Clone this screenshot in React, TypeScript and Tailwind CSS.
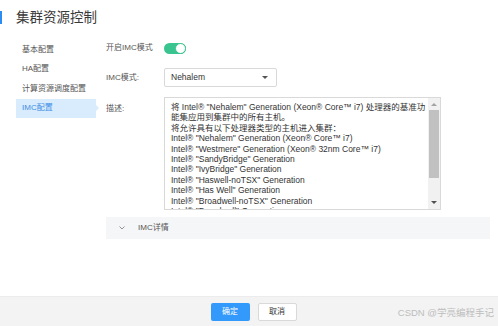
const FONT = '"Liberation Sans", "Noto Sans CJK SC", sans-serif';

const lines = [
  '将 Intel® "Nehalem" Generation (Xeon® Core™ i7) 处理器的基准功',
  "能集应用到集群中的所有主机。",
  "将允许具有以下处理器类型的主机进入集群：",
  'Intel® "Nehalem" Generation (Xeon® Core™ i7)',
  'Intel® "Westmere" Generation (Xeon® 32nm Core™ i7)',
  'Intel® "SandyBridge" Generation',
  'Intel® "IvyBridge" Generation',
  'Intel® "Haswell-noTSX" Generation',
  'Intel® "Has Well" Generation',
  'Intel® "Broadwell-noTSX" Generation',
  'Intel® "Broadwell" Generation',
];

const menu = ["基本配置", "HA配置", "计算资源调度配置", "IMC配置"];

export default function App() {
  return (
    <div
      className="relative flex h-[326px] w-[498px] flex-col overflow-hidden bg-white text-[#555]"
      style={{ fontFamily: FONT }}
    >
      {/* header */}
      <div className="flex h-[40px] items-start pt-[10px]">
        <div className="mt-[1px] h-[13px] w-[2px] bg-[#2d8cf0]" />
        <div className="ml-[14px] text-[13.5px] leading-[15px] text-[#3a3a3a]">集群资源控制</div>
      </div>

      {/* body */}
      <div className="flex flex-1">
        <div className="ml-[16px] w-[80px]">
          {menu.map((m, i) => {
            const active = i === menu.length - 1;
            return (
              <div
                key={m}
                className={
                  active
                    ? "relative flex h-[19.5px] items-center bg-[#d9ecfd] pl-[6px] text-[8px] text-[#3d8ee4]"
                    : "flex h-[19.5px] items-center pl-[6px] text-[8px] text-[#555]"
                }
              >
                {m}
                {active ? (
                  <span className="absolute right-[-3px] top-[6.5px] h-0 w-0 border-y-[3px] border-l-[3px] border-y-transparent border-l-[#d9ecfd]" />
                ) : null}
              </div>
            );
          })}
        </div>

        <div className="ml-[10px] flex w-[384px] flex-col">
          {/* toggle row */}
          <div className="flex h-[16px] items-center">
            <div className="w-[58px] text-[8px] text-[#555]">开启IMC模式</div>
            <div className="relative h-[11px] w-[22px] rounded-full bg-[#3ac48f]">
              <span className="absolute right-0 top-0 h-[11px] w-[11px] rounded-full border border-[#3ac48f] bg-white" />
            </div>
          </div>

          {/* select row */}
          <div className="mt-[12px] flex h-[19px] items-center">
            <div className="w-[58px] text-[8px] text-[#555]">IMC模式:</div>
            <div className="flex h-[19px] w-[113px] items-center justify-between rounded-[2px] border border-[#d9d9d9] pl-[6px] pr-[8px] text-[8.5px] text-[#333]">
              <span>Nehalem</span>
              <span className="h-0 w-0 border-x-[3px] border-t-[3px] border-x-transparent border-t-[#555]" />
            </div>
          </div>

          {/* description */}
          <div className="mt-[10px] flex">
            <div className="w-[58px] pt-[6px] text-[8px] text-[#555]">描述:</div>
            <div className="flex h-[113px] w-[277px] overflow-hidden border border-[#d9d9d9]">
              <div className="flex-1 overflow-hidden pl-[6px] pt-[4px]">
                {lines.map((l) => (
                  <div key={l} className="h-[10.4px] whitespace-nowrap text-[8.5px] leading-[10.4px] text-[#333]">
                    {l}
                  </div>
                ))}
              </div>
              <div className="flex w-[12px] flex-col items-center bg-[#f1f1f1]">
                <span className="mt-[5px] h-0 w-0 border-x-[3px] border-b-[3px] border-x-transparent border-b-[#a3a3a3]" />
                <div className="mt-[4px] h-[68px] w-[10px] bg-[#c1c1c1]" />
                <div className="flex-1" />
                <span className="mb-[5px] h-0 w-0 border-x-[3px] border-t-[3px] border-x-transparent border-t-[#505050]" />
              </div>
            </div>
          </div>

          {/* collapse */}
          <div className="mt-[7px] flex h-[22px] w-[384px] items-center bg-[#f5f6f7] text-[8px] text-[#555]">
            <svg className="ml-[13px]" width="6" height="4" viewBox="0 0 6 4">
              <path d="M0.5 0.5 L3 3 L5.5 0.5" fill="none" stroke="#888" strokeWidth="0.9" />
            </svg>
            <span className="ml-[13px]">IMC详情</span>
          </div>
        </div>
      </div>

      {/* footer */}
      <div className="flex h-[30px] items-center justify-center gap-[8px] border-t border-[#ececec] bg-[#f3f3f3] pl-[9px]">
        <button className="h-[18px] w-[39px] rounded-[2px] bg-[#3399fb] text-[8px] text-white">确定</button>
        <button className="h-[18px] w-[39px] rounded-[2px] border border-[#d9d9d9] bg-white text-[8px] text-[#333]">取消</button>
      </div>

      <div className="absolute bottom-[6px] right-[4px] text-[9.5px] text-[#bdbdbd]">CSDN @学亮编程手记</div>
    </div>
  );
}
